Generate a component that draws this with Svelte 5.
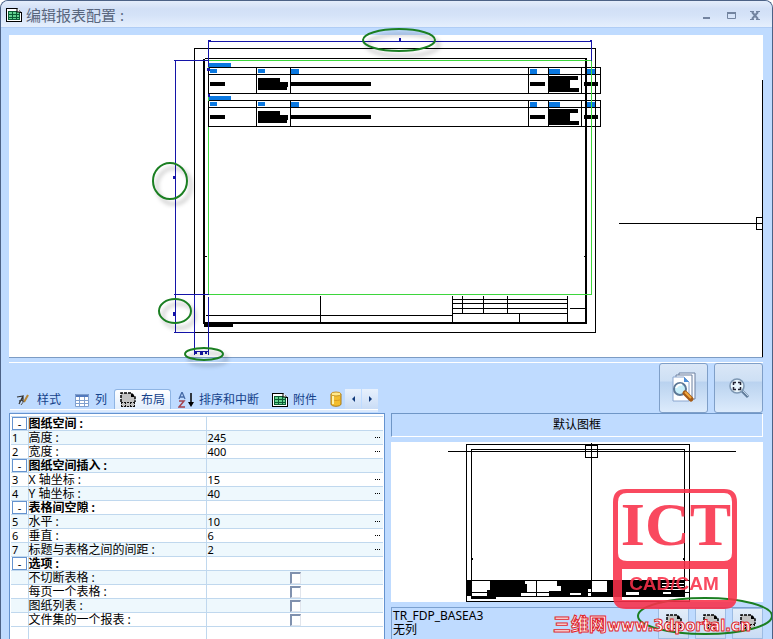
<script lang="ts">
	interface Row {
		label: string;
		no?: number;
		value?: number;
		kind: 'group' | 'value' | 'check';
	}

	const rows: Row[] = [
		{ kind: 'group', label: '图纸空间 :' },
		{ kind: 'value', no: 1, label: '高度 :', value: 245 },
		{ kind: 'value', no: 2, label: '宽度 :', value: 400 },
		{ kind: 'group', label: '图纸空间插入 :' },
		{ kind: 'value', no: 3, label: 'X 轴坐标 :', value: 15 },
		{ kind: 'value', no: 4, label: 'Y 轴坐标 :', value: 40 },
		{ kind: 'group', label: '表格间空隙 :' },
		{ kind: 'value', no: 5, label: '水平 :', value: 10 },
		{ kind: 'value', no: 6, label: '垂直 :', value: 6 },
		{ kind: 'value', no: 7, label: '标题与表格之间的间距 :', value: 2 },
		{ kind: 'group', label: '选项 :' },
		{ kind: 'check', label: '不切断表格 :' },
		{ kind: 'check', label: '每页一个表格 :' },
		{ kind: 'check', label: '图纸列表 :' },
		{ kind: 'check', label: '文件集的一个报表 :' }
	];

	const tabs = [
		{ id: 'style', label: '样式' },
		{ id: 'column', label: '列' },
		{ id: 'layout', label: '布局' },
		{ id: 'sort', label: '排序和中断' },
		{ id: 'sheet', label: '附件' }
	];

	let active = $state('layout');
</script>

{#snippet sheet()}
	<svg class="icon" viewBox="0 0 16 16" aria-hidden="true">
		<g shape-rendering="crispEdges">
			<path d="M0 1H12V3H14V5H16V15H0Z" />
			<path d="M1 2H11V6H15V14H1Z" fill="#fff" />
			<path d="M2 4H14V13H2Z" fill="#0b5c34" />
			<path d="M3 5h3v2h-3zM7 5h3v2h-3zM11 5h2v2h-2zM3 8h3v2h-3zM7 8h3v2h-3zM11 8h2v2h-2zM3 11h3v1h-3zM7 11h3v1h-3zM11 11h2v1h-2z" fill="#62d18e" />
		</g>
		<path d="M11 1V5H15" fill="#fff" stroke="#000" />
	</svg>
{/snippet}

{#snippet dashedSheet()}
	<svg class="icon" viewBox="0 0 16 16" aria-hidden="true">
		<path d="M1 1H11L15 6V15H1Z" fill="#c3c3c3" />
		<path d="M1 10V1H11L15 5V10" fill="none" stroke="#000" stroke-width="1.5" stroke-dasharray="3 1" />
		<path d="M11 1V5H15Z" fill="#000" />
		<path d="M1 10.5H15M1 14.5H15M1.5 10V15M5.5 10V15M10.5 10V15M14.5 10V15" fill="none" stroke="#111" stroke-dasharray="2 1" />
	</svg>
{/snippet}

{#snippet tableBlocks(y: number)}
	<g transform="translate(0 {y})">
		<path class="ink" d="M208 0H600V26H208ZM208 7H600M256 0V26M290 0V26M528 0V26M548 0V26M581 0V26" />
		<path class="tag" d="M208 -4h22v3h-22zM210 2h6v3h-6zM258 2h6v3h-6zM291 2h7v4h-7zM530 2h6v4h-6zM549 2h10v4h-10zM587 2h7v4h-7z" />
		<path class="solid" d="M210 15h14v3h-14zM258 11h21v4h8v4h-1v3h-28zM291 15h79v3h-79zM530 15h14v3h-14zM549 9h28v3h-8v9h9v3h-29zM584 15h13v3h-13z" />
	</g>
{/snippet}

<div class="window">
	<header class="title">
		{@render sheet()}
		<h1>编辑报表配置 :</h1>
		<div class="title__controls">
			<button type="button" aria-label="最小化">
				<svg viewBox="0 0 12 12"><path d="M2 9H9" /></svg>
			</button>
			<button type="button" aria-label="最大化">
				<svg viewBox="0 0 12 12"><path d="M2.5 3.5H10.5V9.5H2.5Z" stroke-width="1" /><path d="M2 4H11" /></svg>
			</button>
			<button type="button" aria-label="关闭">
				<svg viewBox="0 0 12 12"><path d="M3 3L9 10M9 3L3 10" /><path d="M1 2.5H5M7 2.5H11M1 10.5H5M7 10.5H11" stroke-width="1" /></svg>
			</button>
		</div>
	</header>

	<main>
		<div class="drawing">
			<svg viewBox="9 35 754 322" role="img" aria-label="预览">
				<g transform="translate(.5 .5)" shape-rendering="crispEdges">
					<path class="ink" d="M194 48H595V332H194ZM204 58H586" />
					<!-- title block -->
					<path class="ink" d="M205 315H452M320 295V322M452 295V322M462 295V313M483 295V313M507 295V313M567 295V322M519 313V322M452 299H567M452 303H567M452 308H567M452 313H567M569 308H584M204 256H206M583 256H586" />
					{@render tableBlocks(67)}
					{@render tableBlocks(100)}
					<path class="frame" d="M203.5 58V322.5H585.5V58" />
					<path class="limit" d="M208 60H591V294H208Z" />
					<path class="ink" d="M208 67V93M208 100V126" />
					<path class="solid" d="M204 323h28v3h-28z" />
					<!-- dimensions -->
					<path class="dim" d="M208 41H591M208 39V66M591 39V60M173 60H208M175 60V332M173 294H208M173 332H194M194 294V354M208 296V354M194 351H208" />
					<path class="dim dim--mark" d="M399 38h1v3h-1zM173 176h2v2h-2zM173 312h2v3h-2zM200 352h2v2h-2zM207 68h2v2h-2zM208 94h1v2h-1zM208 40h2v1h-2zM590 40h1v1h-1zM195 352h1v1h-1zM205 352h1v1h-1z" />
					<path class="ink" d="M762 79V356M618 223H762M762 217H756V229H762" />
				</g>
				<g class="marker">
					<ellipse cx="399" cy="40" rx="36" ry="11" />
					<ellipse cx="170" cy="181" rx="17" ry="18" />
					<ellipse cx="175" cy="311" rx="16" ry="12" />
					<ellipse cx="204" cy="354" rx="19" ry="6" />
				</g>
			</svg>
		</div>

		<div class="bar">
			<div class="tabs" role="tablist">
				{#each tabs as tab}
					<button
						type="button"
						role="tab"
						class="tab"
						class:tab--active={active === tab.id}
						aria-selected={active === tab.id}
						onclick={() => (active = tab.id)}
					>
						{#if tab.id === 'style'}
							<svg class="icon" viewBox="0 0 16 16" aria-hidden="true">
								<path d="M1 5L7 4L3 12M7 4L7 10M3 9L7 8" fill="none" stroke="#333" stroke-width="1.2" />
								<path d="M12 3L8 10" stroke="#b98736" stroke-width="2" /><path d="M8 9L5 13" stroke="#555" />
							</svg>
						{:else if tab.id === 'column'}
							<svg class="icon" viewBox="0 0 16 16" aria-hidden="true">
								<path d="M1.5 2.5H14.5V14.5H1.5Z" fill="#fff" /><path d="M1 2H15V5H1Z" fill="#5279bd" />
								<path d="M1.5 2.5H14.5V14.5H1.5ZM1 8.5H15M1 11.5H15M5.5 5V14M10.5 5V14" fill="none" stroke="#7f9fce" />
							</svg>
						{:else if tab.id === 'layout'}
							{@render dashedSheet()}
						{:else if tab.id === 'sort'}
							<svg class="icon" viewBox="0 0 16 16" aria-hidden="true">
								<path d="M1 7L4 0L7 7M2 5H6" fill="none" stroke="#466ba8" stroke-width="1.3" />
								<path d="M1 9H6L1 15H7" fill="none" stroke="#a34450" stroke-width="1.5" />
								<path d="M13 1V13" stroke="#000" stroke-width="1.5" /><path d="M10 10H16L13 15Z" />
							</svg>
						{:else}
							{@render sheet()}
						{/if}
						{tab.label}
					</button>
				{/each}
				<svg class="icon tabs__more" viewBox="0 0 16 16" aria-hidden="true">
					<path d="M3 3V13C3 16 13 16 13 13V3" fill="#f2bd2d" stroke="#a87916" />
					<ellipse cx="8" cy="3" rx="5" ry="2" fill="#ffe98a" stroke="#c7962b" />
					<path d="M3 8C4 10 12 10 13 8" fill="none" stroke="#d99c20" />
					<path d="M5 5V13" stroke="#fff2a8" stroke-width="2" />
				</svg>
				<div class="tabs__scroll">
					<button type="button" aria-label="向左"><svg viewBox="0 0 8 8"><path d="M6 1V7L3 4Z" /></svg></button>
					<button type="button" aria-label="向右"><svg viewBox="0 0 8 8"><path d="M3 1V7L6 4Z" /></svg></button>
				</div>
			</div>
			<div class="tools">
				<button type="button" class="tool" aria-label="预览">
					<svg width="28" height="32" viewBox="0 0 28 32">
						<path d="M9 1H25V27H9Z" fill="#f7faff" stroke="#6b7f9e" />
						<path d="M6 3H22V28H6Z" fill="#fff" stroke="#6b7f9e" />
						<path d="M3 5H14L19 10V29H3Z" fill="#fff" stroke="#8aa6cf" /><path d="M14 5V10H19Z" fill="#4d8fd8" />
						<circle cx="10" cy="17" r="6" fill="#c8effa" stroke="#5c7896" stroke-width="2" />
						<path d="M6 16C7 13 10 12 12 13" fill="none" stroke="#fff" stroke-width="2" />
						<path d="M15 21L21 27" stroke="#a45c19" stroke-width="5" stroke-linecap="round" /><path d="M15 20L21 26" stroke="#f2a83a" stroke-width="2" />
					</svg>
				</button>
				<button type="button" class="tool" aria-label="缩放">
					<svg width="22" height="22" viewBox="0 0 22 22">
						<path d="M13 13L20 20" stroke="#617d9c" stroke-width="3" /><path d="M14 13L20 19" stroke="#bdd0e3" />
						<circle cx="9" cy="9" r="7" fill="#e8f4fb" stroke="#7d97b3" stroke-width="1.5" />
						<path d="M5.5 8V5.5H8M10 5.5H12.5V8M12.5 10V12.5H10M8 12.5H5.5V10" fill="none" stroke="#223" stroke-width="1.5" />
					</svg>
				</button>
			</div>
		</div>

		<div class="panels">
			<section class="props">
				<table>
					<colgroup><col class="props__no" /><col class="props__name" /><col /></colgroup>
					<tbody>
						{#each rows as row, i}
							<tr class:tint={i % 2 === 1}>
								<td class="no">
									{#if row.kind === 'group'}
										<button type="button" class="toggle" aria-label="折叠">-</button>
									{:else}{row.no ?? ''}{/if}
								</td>
								<td class="name" class:group={row.kind === 'group'}>
									{#if row.kind === 'check'}
										<label for="opt-{i}">{row.label}</label>
									{:else}{row.label}{/if}
								</td>
								<td>
									{#if row.kind === 'value'}
										<div class="value">
											<span>{row.value}</span>
											<button type="button" class="more" aria-label="更多">
												<svg viewBox="0 0 6 1"><path d="M0 0h1v1H0zM2 0h1v1H2zM4 0h1v1H4z" /></svg>
											</button>
										</div>
									{:else if row.kind === 'check'}
										<div class="check"><input type="checkbox" id="opt-{i}" /></div>
									{/if}
								</td>
							</tr>
						{/each}
						<tr class="rest"><td></td><td></td><td></td></tr>
					</tbody>
				</table>
			</section>

			<section class="default">
				<h2>默认图框</h2>
				<svg class="default__preview" viewBox="391 442 372 160" role="img" aria-label="默认图框">
					<g transform="translate(.5 .5)" shape-rendering="crispEdges">
						<path class="ink" d="M466 444H689V601H466ZM471 449H684V596H471ZM447 451H735M591 442V595M585 445H597V457H585ZM466 580H689M471 592H689M536 580V596" />
						<path class="solid" d="M466 580h5v15h-5zM490 580h34v4h2v8h-6v3h-33v-5h3zM557 580h33v8h-3v7h-38v-4h12v-6h-4zM607 580h77v15h-92v-3h15zM471 596h24v2h-24zM471 558h1v1h-1zM683 558h1v1h-1z" />
						<path class="paper" d="M570 593h10v1h-10zM626 592h12v2h-12zM663 592h7v1h-7zM661 583H683M661 586H683M661 589H683" />
					</g>
				</svg>
				<footer class="default__info">
					<p>TR_FDP_BASEA3<br />无列</p>
					<div class="default__actions">
						<button type="button" aria-label="新建">{@render dashedSheet()}</button>
						<button type="button" aria-label="编辑">{@render dashedSheet()}</button>
						<button type="button" aria-label="删除">{@render dashedSheet()}</button>
					</div>
				</footer>
				<svg class="stamp" viewBox="391 413 372 226" aria-hidden="true">
					<ellipse class="stamp__ring" cx="705" cy="616" rx="67" ry="18" />
					<g class="stamp__logo">
						<path
							fill-rule="evenodd"
							d="M626 489H724Q737 489 737 502V596Q737 609 724 609H626Q613 609 613 596V502Q613 489 626 489ZM627 493Q618 493 618 502V553Q618 561 627 561H724Q732 561 732 553V502Q732 493 724 493ZM622 569V600H728V569Z"
						/>
						<text class="stamp__big" x="676" y="545">ICT</text>
						<text class="stamp__small" x="674" y="590">CAD/CAM</text>
					</g>
					<text class="stamp__site" x="553" y="631"><tspan class="stamp__cn">三维网</tspan>www.3dportal.cn</text>
				</svg>
			</section>
		</div>
	</main>
</div>

<style>
	:global(body) {
		margin: 0;
		background: #fff;
	}

	.window {
		box-sizing: border-box;
		display: flex;
		flex-direction: column;
		min-height: 100vh;
		border: solid #4c6286;
		border-width: 1px 1px 0;
		border-radius: 8px 8px 0 0;
		background: #bfdbff;
		overflow: hidden;
		font: 12px/14px 'Noto Sans', 'Noto Sans CJK SC', sans-serif;
		color: #000;
	}

	button {
		padding: 0;
		border: none;
		background: transparent;
		font: inherit;
		color: inherit;
	}

	.icon {
		width: 16px;
		height: 16px;
		flex-shrink: 0;
	}

	.title {
		display: flex;
		align-items: center;
		gap: 4px;
		height: 27px;
		padding: 2px 11px 0 5px;
		box-sizing: border-box;
		border-bottom: 1px solid #b0cdf5;
		background: linear-gradient(#e4edfb 0, #d2e0f6 30%, #d5e3f8 55%, #e5effd 100%);
	}

	.title h1 {
		flex: 1;
		margin: 0;
		font-size: 15px;
		line-height: 20px;
		font-weight: 400;
		color: #59667d;
	}

	.title__controls {
		display: flex;
		gap: 12px;
	}

	.title__controls svg {
		display: block;
		width: 12px;
		height: 12px;
		fill: none;
		stroke: #7384a0;
		stroke-width: 2;
	}

	main {
		flex: 1;
		display: flex;
		flex-direction: column;
		padding: 7px 9px 0 8px;
	}

	.drawing {
		background: #fff;
		border-bottom: 1px solid #7c9cc4;
	}

	.drawing svg,
	.default__preview {
		display: block;
		width: 100%;
		overflow: visible;
	}

	.ink,
	.limit,
	.frame,
	.dim {
		fill: none;
		stroke: #000;
		stroke-width: 1;
	}

	.frame {
		stroke-width: 2;
	}

	.limit {
		stroke: #3dd63d;
	}

	.dim {
		stroke: #1414a8;
	}

	.dim--mark {
		fill: #1414a8;
	}

	.solid {
		fill: #000;
		stroke: #000;
	}

	.tag {
		fill: #0a78e0;
		stroke: #0a78e0;
	}

	.paper {
		fill: #fff;
		stroke: #fff;
	}

	.marker {
		fill: none;
		stroke: #1b7f22;
		stroke-width: 2;
		filter: drop-shadow(4px 5px 2px rgba(0, 0, 0, 0.3));
	}

	.bar {
		display: grid;
		grid-template-columns: 376fr 372fr;
		gap: 6px;
		margin-top: 4px;
		border-top: 1px solid #fff;
	}

	.tabs {
		align-self: end;
		display: flex;
		align-items: stretch;
		gap: 1px;
		height: 20px;
		margin: 0 10px 3px 1px;
		border-bottom: 1px solid #fff;
		box-shadow: 0 2px #dceafd;
		color: #15428b;
	}

	.tab {
		display: flex;
		align-items: center;
		gap: 5px;
		box-sizing: border-box;
		padding: 0 5px;
		border: solid transparent;
		border-width: 1px 1px 0;
		white-space: nowrap;
	}

	.tab--active {
		border-color: #8fb5e4;
		border-radius: 3px 3px 0 0;
		background: linear-gradient(#fff, #e2eefd);
	}

	.tabs__more {
		align-self: center;
		margin-left: 4px;
	}

	.tabs__scroll {
		display: flex;
		gap: 1px;
		margin-left: auto;
	}

	.tabs__scroll button {
		width: 16px;
		background: linear-gradient(#e8f1fd, #c9dcf6);
	}

	.tabs__scroll svg {
		width: 8px;
		height: 8px;
		fill: #123a7a;
	}

	.tools {
		display: flex;
		justify-content: flex-end;
		gap: 6px;
	}

	.tool {
		display: grid;
		place-items: center;
		box-sizing: border-box;
		width: 49px;
		height: 50px;
		border: 1px solid #7f9fc8;
		border-radius: 3px;
		background: linear-gradient(#dae7f7 0, #cddff4 36%, #b9d2ef 37%, #dcebfc 100%);
	}

	.panels {
		flex: 1;
		display: grid;
		grid-template-columns: 376fr 372fr;
		gap: 6px;
	}

	.props {
		display: flex;
		padding: 2px 1px 0;
		border: 1px solid #6593cf;
		border-bottom: none;
		background: #fff;
	}

	.props table {
		width: 100%;
		height: 100%;
		table-layout: fixed;
		border-collapse: collapse;
		border-top: 1px solid #c3daf2;
	}

	.props__no {
		width: 17px;
	}

	.props__name {
		width: 178px;
	}

	.props td {
		box-sizing: border-box;
		height: 14px;
		padding: 0 0 0 1px;
		border-bottom: 1px solid #c0d8ee;
		line-height: 13px;
		white-space: nowrap;
	}

	.props .name {
		padding-left: 0;
	}

	.props td + td {
		border-left: 1px solid #c0d8ee;
	}

	.props .rest td {
		height: auto;
		border-bottom: none;
	}

	.tint {
		background: #eef8fd;
	}

	.props .no,
	.value {
		font-size: 11px;
	}

	.group {
		font-weight: 700;
	}

	.toggle {
		display: block;
		box-sizing: border-box;
		width: 15px;
		height: 13px;
		border: 1px solid #6593cf;
		background: #fff;
		line-height: 10px;
	}

	.value {
		display: flex;
		justify-content: space-between;
		padding-right: 2px;
	}

	.more svg {
		display: block;
		width: 6px;
		height: 1px;
	}

	.check {
		display: flex;
		justify-content: center;
	}

	.check input {
		appearance: none;
		box-sizing: border-box;
		width: 11px;
		height: 12px;
		margin: 0;
		border: 1px solid #e1e5ec;
		border-top: 2px solid #8091ae;
		border-left: 2px solid #8091ae;
		background: #fff;
	}

	.check input:checked {
		background: #15428b;
	}

	.default {
		position: relative;
		display: flex;
		flex-direction: column;
	}

	.default h2 {
		margin: 0 0 5px;
		border: 1px solid #6f96c6;
		border-right-color: #fff;
		border-bottom-color: #fff;
		font-size: 12px;
		line-height: 22px;
		font-weight: 400;
		text-align: center;
	}

	.default__preview {
		background: #fff;
	}

	.default__info {
		flex: 1;
		display: flex;
		justify-content: space-between;
		margin-top: 5px;
		border: solid #7ba0cf;
		border-width: 1px 0 0 1px;
	}

	.default__info p {
		margin: 1px;
	}

	.default__actions {
		display: flex;
		gap: 6px;
	}

	.default__actions button {
		width: 31px;
		border: 1px solid #9dbce3;
		background: linear-gradient(#e3edf9, #c9dcf4);
	}

	/* watermark lies over the preview and the footer */
	.stamp {
		position: absolute;
		top: 0;
		left: 0;
		width: 100%;
		overflow: visible;
		pointer-events: none;
	}

	.stamp__ring {
		fill: none;
		stroke: #1b7f22;
		stroke-width: 2;
	}

	.stamp__logo {
		fill: #f9304a;
		opacity: 0.88;
		text-anchor: middle;
	}

	.stamp__big {
		font: 700 62px 'Liberation Serif', serif;
	}

	.stamp__small {
		font: 700 19px 'Liberation Sans', sans-serif;
	}

	.stamp__site {
		font: 700 15px 'DejaVu Sans', sans-serif;
		fill: #fff;
		stroke: #e0252c;
		stroke-width: 1px;
	}

	.stamp__cn {
		font: 700 18px 'Noto Sans CJK SC', sans-serif;
	}
</style>
